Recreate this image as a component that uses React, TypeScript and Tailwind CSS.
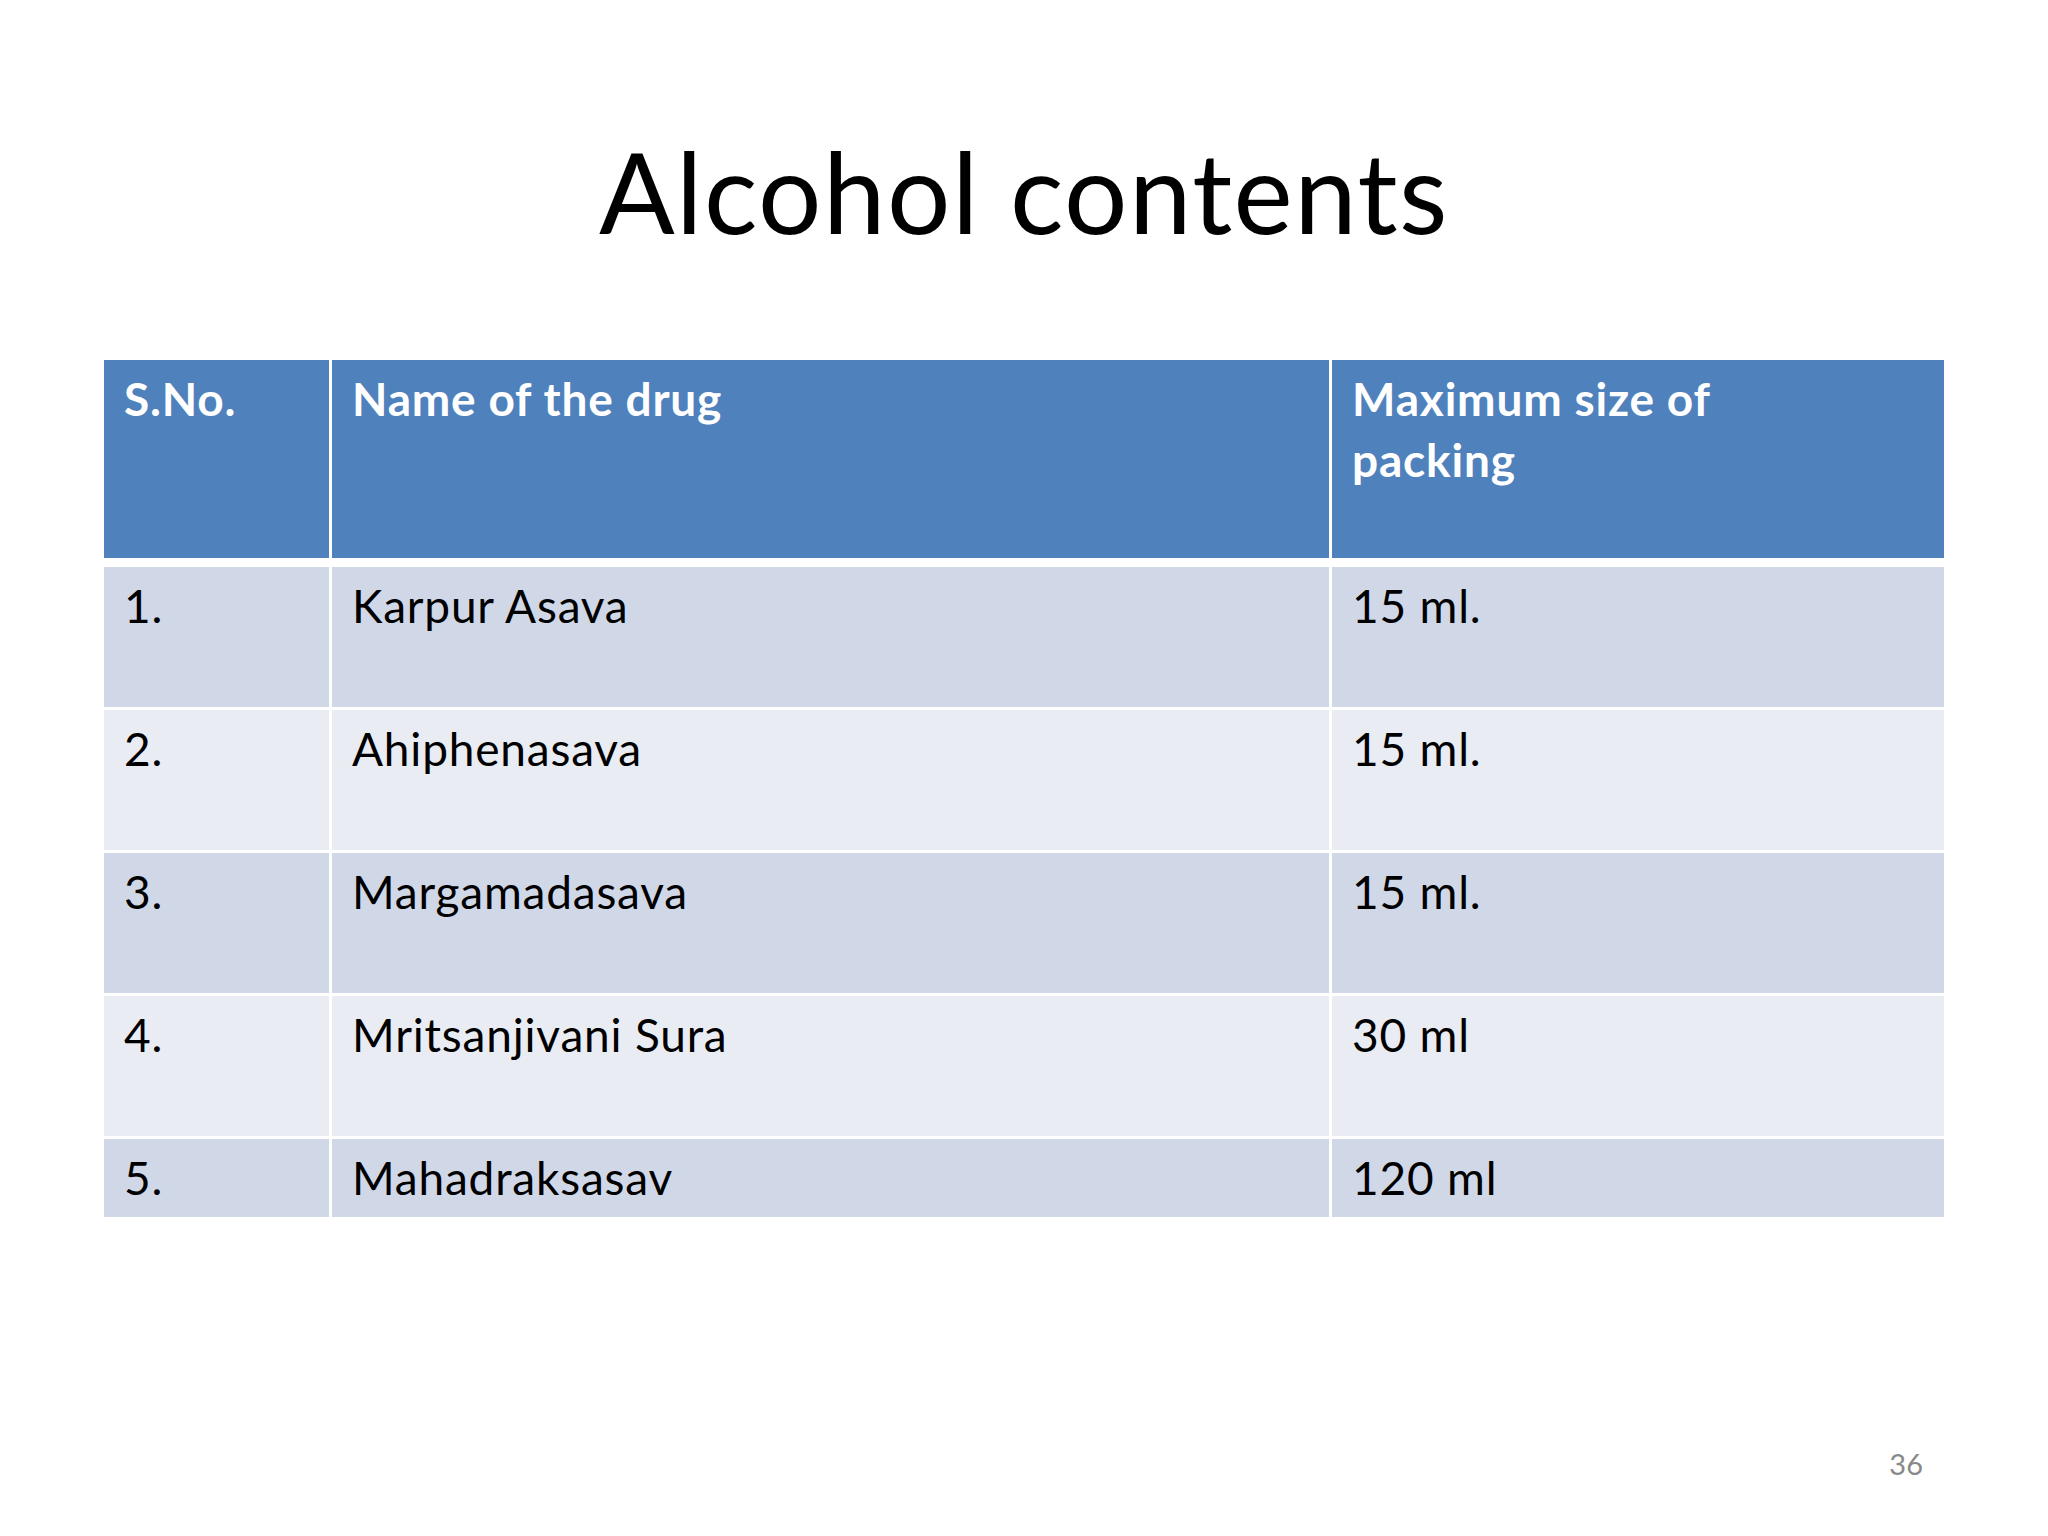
const rows = [
  { no: "1.", name: "Karpur Asava", size: "15 ml." },
  { no: "2.", name: "Ahiphenasava", size: "15 ml." },
  { no: "3.", name: "Margamadasava", size: "15 ml." },
  { no: "4.", name: "Mritsanjivani Sura", size: "30 ml" },
  { no: "5.", name: "Mahadraksasav", size: "120 ml" },
];

function HeadCell({ children }: { children: React.ReactNode }) {
  return (
    <div className="h-[198px] bg-[#4f81bd] pl-[20px] pr-4 pt-[8px] text-[46px] leading-[61px] tracking-[0.8px] font-bold text-white">
      {children}
    </div>
  );
}

function BodyCell({ children, odd, last }: { children: React.ReactNode; odd: boolean; last: boolean }) {
  return (
    <div
      className={
        (odd ? "bg-[#d0d8e8] " : "bg-[#e9ecf3] ") +
        (last ? "h-[78px] " : "h-[140px] ") +
        "pl-[20px] pr-4 pt-[8px] text-[46px] leading-[61px] tracking-[0.8px] text-black"
      }
    >
      {children}
    </div>
  );
}

export default function App() {
  return (
    <div className="w-[2048px] h-[1536px] bg-white flex flex-col [font-family:Lato,sans-serif]">
      <h1 className="pt-[135px] text-center text-[112px] leading-[112px] tracking-[1.5px] font-normal text-black">
        Alcohol contents
      </h1>

      <div className="mt-[113px] ml-[104px] grid w-[1840px] grid-cols-[225px_997px_612px] gap-x-[3px] gap-y-[3px]">
        <HeadCell>S.No.</HeadCell>
        <HeadCell>Name of the drug</HeadCell>
        <HeadCell>
          Maximum size of
          <br />
          packing
        </HeadCell>
        <div className="col-span-3 h-[3px]" />
        {rows.map((r, i) => (
          <div key={r.no} className="contents">
            <BodyCell odd={i % 2 === 0} last={i === rows.length - 1}>{r.no}</BodyCell>
            <BodyCell odd={i % 2 === 0} last={i === rows.length - 1}>{r.name}</BodyCell>
            <BodyCell odd={i % 2 === 0} last={i === rows.length - 1}>{r.size}</BodyCell>
          </div>
        ))}
      </div>

      <div className="mt-auto mb-[58px] pr-[125px] text-right text-[29px] leading-[29px] text-[#898989]">
        36
      </div>
    </div>
  );
}
